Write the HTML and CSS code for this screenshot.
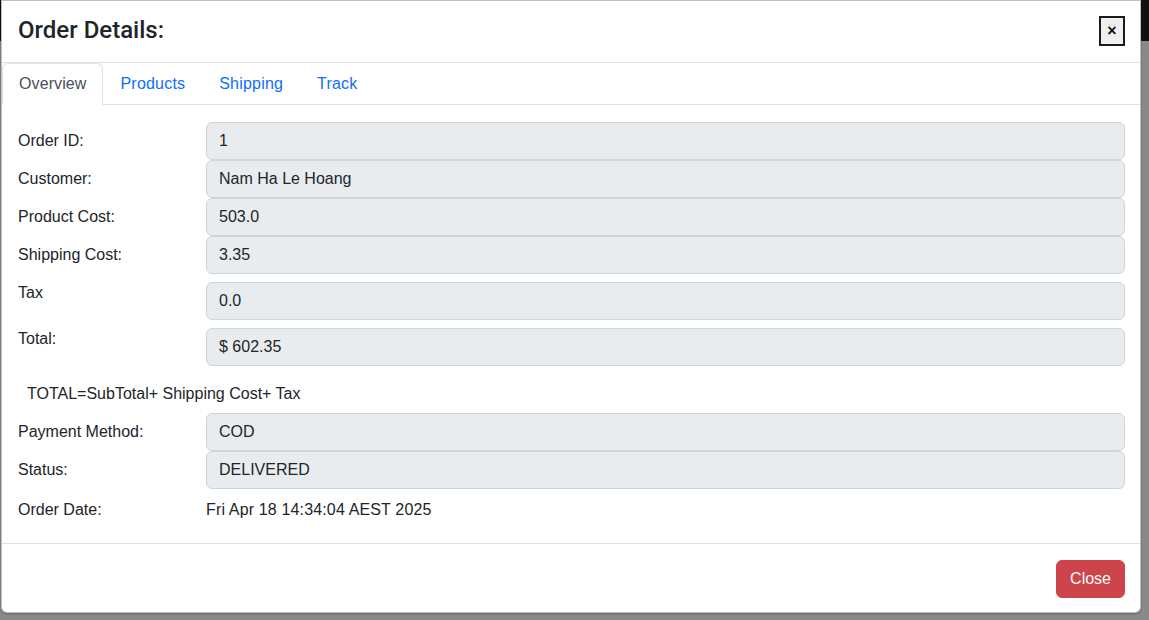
FILE: index.html
```html
<!DOCTYPE html>
<html>
<head>
<meta charset="utf-8">
<link rel="stylesheet" href="styles.css">
</head>
<body>
<div class="page-top"></div>
<div class="modal">
  <div class="modal-header">
    <h4 class="modal-title">Order Details:</h4>
    <button class="x-btn">×</button>
  </div>
  <ul class="tabs">
    <li class="tab active">Overview</li>
    <li class="tab">Products</li>
    <li class="tab">Shipping</li>
    <li class="tab">Track</li>
  </ul>
  <div class="modal-body">
    <div class="row"><label>Order ID:</label><div class="field">1</div></div>
    <div class="row"><label>Customer:</label><div class="field">Nam Ha Le Hoang</div></div>
    <div class="row"><label>Product Cost:</label><div class="field">503.0</div></div>
    <div class="row"><label>Shipping Cost:</label><div class="field">3.35</div></div>
    <div class="row row-top"><label>Tax</label><div class="field">0.0</div></div>
    <div class="row row-top"><label>Total:</label><div class="field">$ 602.35</div></div>
    <p class="formula">TOTAL=SubTotal+ Shipping Cost+ Tax</p>
    <div class="row"><label>Payment Method:</label><div class="field">COD</div></div>
    <div class="row"><label>Status:</label><div class="field">DELIVERED</div></div>
    <div class="row row-date"><label>Order Date:</label><div class="plain">Fri Apr 18 14:34:04 AEST 2025</div></div>
  </div>
  <div class="modal-footer">
    <button class="btn-danger">Close</button>
  </div>
</div>
</body>
</html>
```
FILE: styles.css
```css
* { box-sizing: border-box; }
html, body {
  margin: 0;
  padding: 0;
  height: 100%;
}
body {
  background: #898989;
  font-family: "Liberation Sans", Arial, sans-serif;
  font-size: 16px;
  line-height: 24px;
  color: #212529;
  position: relative;
  overflow: hidden;
}
.page-top {
  height: 41px;
  background: #111214;
}
.modal {
  position: absolute;
  left: 1px;
  top: 0;
  width: 1140px;
  background: #fff;
  border: 1px solid rgba(0,0,0,0.25);
  border-radius: 0 0 6px 6px;
  box-shadow: 0 1px 2px rgba(0,0,0,0.3);
}
.modal-header {
  display: flex;
  align-items: center;
  justify-content: space-between;
  padding: 13px 15px 17px 16px;
  border-bottom: 1px solid #dee2e6;
  height: 62px;
}
.modal-title {
  margin: 0;
  font-family: Roboto, "Liberation Sans", sans-serif;
  font-weight: 500;
  font-size: 24px;
  line-height: 28px;
  color: #212529;
}
.x-btn {
  width: 26px;
  height: 30px;
  background: #efefef;
  border: 2px solid #1b1b1b;
  padding: 0;
  font-family: "Liberation Sans", Arial, sans-serif;
  font-size: 16px;
  font-weight: bold;
  line-height: 1;
  color: #111;
  margin-top: 2px;
}
.tabs {
  list-style: none;
  margin: 0;
  padding: 0;
  display: flex;
  border-bottom: 1px solid #dee2e6;
  height: 42px;
}
.tab {
  padding: 8px 16px;
  color: #0d6efd;
  border: 1px solid transparent;
  border-radius: 6px 6px 0 0;
  margin-bottom: -1px;
  height: 42px;
  letter-spacing: 0.2px;
}
.tab.active {
  color: #495057;
  border-color: #dee2e6 #dee2e6 #fff;
  background: #fff;
  letter-spacing: 0.1px;
}
.modal-body {
  padding: 17px 15px 14px 16px;
}
.row {
  display: grid;
  grid-template-columns: 188px 1fr;
  align-items: center;
  min-height: 38px;
}
.row-top {
  align-items: start;
}
.row-top label {
  margin-top: 7px;
}
.row-top .field {
  margin-top: 8px;
}
.row-date {
  min-height: 40px;
  padding-top: 2px;
}
.field {
  height: 38px;
  background: #e9ecef;
  border: 1px solid #ced4da;
  border-radius: 6px;
  padding: 6px 12px;
  line-height: 24px;
}
.plain {
  line-height: 24px;
  letter-spacing: 0.15px;
}
.formula {
  margin: 16px 0 7px 0;
  padding-left: 9px;
  line-height: 24px;
}
.modal-footer {
  display: flex;
  justify-content: flex-end;
  border-top: 1px solid #dee2e6;
  padding: 16px 15px 14px 16px;
}
.btn-danger {
  font-family: "Liberation Sans", Arial, sans-serif;
  font-size: 16px;
  line-height: 24px;
  color: #fff;
  background: #cd444b;
  border: 1px solid #cd444b;
  border-radius: 6px;
  padding: 6px 13px;
  height: 38px;
}
```
